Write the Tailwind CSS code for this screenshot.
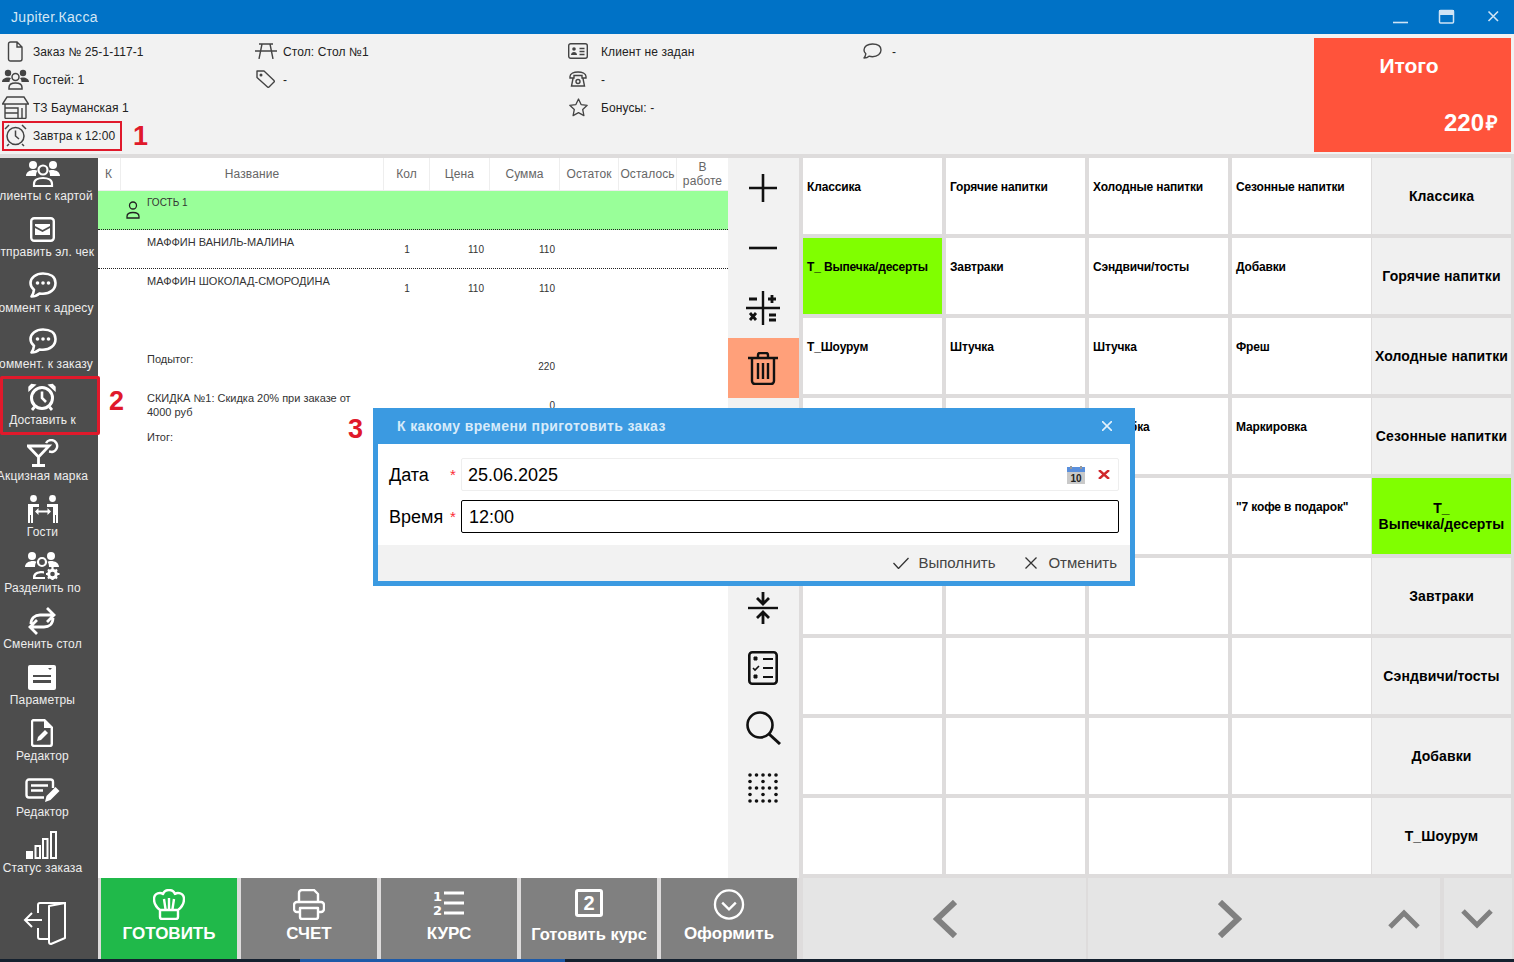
<!DOCTYPE html>
<html lang="ru">
<head>
<meta charset="UTF-8">
<title>Jupiter.Касса</title>
<script src="https://cdn.jsdelivr.net/npm/@tailwindcss/browser@4"></script>
</head>
<body class="relative w-[1514px] h-[962px] overflow-hidden flex flex-col bg-[#dedcdc] font-['Liberation_Sans',Arial,sans-serif] text-black">

<!-- заголовок окна -->
<div class="h-[34px] shrink-0 bg-[#0072c6] flex items-center pl-[11px] text-[#d3e6f5] text-sm">
  <span class="flex-1 tracking-[0.3px]">Jupiter.Касса</span>
  <svg class="w-[120px] h-[34px] mr-[1px]" viewBox="0 0 120 34" fill="none" stroke="#cfe4f5" stroke-width="1.6">
    <path d="M0 22.5H15" />
    <rect x="46.5" y="10.5" width="14" height="12.5" rx="1" stroke-width="1.5" />
    <rect x="46" y="10" width="15" height="5" fill="#cfe4f5" stroke="none" />
    <path d="M95.5 11.5l9.5 9.5M105 11.5l-9.5 9.5" />
  </svg>
</div>

<!-- шапка заказа -->
<div class="h-[120px] shrink-0 bg-[#f2f2f2] flex text-xs text-[#222] tracking-[0.1px]">
  <div class="w-[255px] pt-[3px] flex flex-col">
    <div class="h-[28px] flex items-center">
      <div class="w-[33px] flex justify-center pr-[3px]"><svg class="w-[16px] h-[21px]" viewBox="0 0 16 21" fill="none" stroke="#444" stroke-width="1.4"><path d="M1.5 3a2 2 0 0 1 2-2h6.5l5 5v12a2 2 0 0 1-2 2h-9.500a2 2 0 0 1-2-2zM10 1v5h5"/></svg></div>
      <span class="pt-[2px]">Заказ № 25-1-117-1</span>
    </div>
    <div class="h-[28px] flex items-center">
      <div class="w-[33px] flex justify-center pr-[3px]"><svg class="w-[27px] h-[21px]" viewBox="0 0 27 21" fill="#444"><circle cx="6" cy="4" r="3.200"/><circle cx="21" cy="4" r="3.200"/><path d="M0 13c0-3 3-4.500 6-4.500 1.500 0 2.500.3 3 .7-1 1-1.500 2.300-1.500 3.800zM27 13c0-3-3-4.500-6-4.500-1.500 0-2.500.3-3 .7 1 1 1.500 2.300 1.500 3.800z"/><circle cx="13.500" cy="8" r="3.500" fill="none" stroke="#444" stroke-width="1.500"/><path d="M7 20v-1.500c0-3 3-4.500 6.500-4.500s6.500 1.500 6.500 4.500V20z" fill="none" stroke="#444" stroke-width="1.500"/></svg></div>
      <span class="pt-[2px]">Гостей: 1</span>
    </div>
    <div class="h-[28px] flex items-center">
      <div class="w-[33px] flex justify-center pr-[3px]"><svg class="w-[27px] h-[23px]" viewBox="0 0 27 23" fill="none" stroke="#444" stroke-width="1.400"><path d="M5 1h17l4.500 7H.5zM3 8v14.500M24 8v14.500M3 22.500h21M3 12h13v10.500M3 17h13M20 12v10.500"/></svg></div>
      <span class="pt-[2px]">ТЗ Бауманская 1</span>
    </div>
    <div class="h-[28px] flex items-center">
      <div class="w-[33px] flex justify-center pr-[3px]"><svg class="w-[23px] h-[24px]" viewBox="0 0 23 24" fill="none" stroke="#444" stroke-width="1.500"><circle cx="11.500" cy="13" r="8.500"/><path d="M11.500 7.500V13l3.500 3M1 6l4-4M22 6l-4-4M5 21l-2 2M18 21l2 2"/></svg></div>
      <span class="pt-[2px]">Завтра к 12:00</span>
    </div>
  </div>
  <div class="w-[313px] pt-[3px] flex flex-col">
    <div class="h-[28px] flex items-center">
      <div class="w-[28px]"><svg class="w-[22px] h-[16px]" viewBox="0 0 22 16" fill="none" stroke="#444" stroke-width="1.400"><path d="M4 1h14M0 8h22M7 1L4 16M15 1l3 15"/></svg></div>
      <span class="pt-[2px]">Стол: Стол №1</span>
    </div>
    <div class="h-[28px] flex items-center">
      <div class="w-[28px] pl-[1px]"><svg class="w-[19px] h-[18px]" viewBox="0 0 19 18" fill="none" stroke="#444" stroke-width="1.400"><path d="M1 1h7l10 9.500a1 1 0 0 1 0 1.500l-5 5a1 1 0 0 1-1.500 0L1 7.500z" stroke-linejoin="round"/><circle cx="5" cy="5" r=".8" fill="#444"/></svg></div>
      <span class="pt-[2px]">-</span>
    </div>
    <div class="h-[28px]"></div>
  </div>
  <div class="w-[295px] pt-[3px] flex flex-col">
    <div class="h-[28px] flex items-center">
      <div class="w-[33px]"><svg class="w-[20px] h-[16px]" viewBox="0 0 20 16" fill="none" stroke="#444" stroke-width="1.400"><rect x=".7" y=".7" width="18.600" height="14.600" rx="2"/><circle cx="6" cy="6" r="1.800" fill="#444" stroke="none"/><path d="M3 12c0-2 1.500-3 3-3s3 1 3 3" fill="#444" stroke="none"/><path d="M11.500 5.500h5M11.500 8.500h5M11.500 11.500h5"/></svg></div>
      <span class="pt-[2px]">Клиент не задан</span>
    </div>
    <div class="h-[28px] flex items-center">
      <div class="w-[33px] pl-[1px]"><svg class="w-[18px] h-[16px]" viewBox="0 0 18 16" fill="none" stroke="#444" stroke-width="1.400"><path d="M1 5.500C1 2.500 5 1 9 1s8 1.500 8 4.500V7h-4V4.500H5V7H1zM4 7.500L2.500 15h13L14 7.500"/><circle cx="9" cy="10.500" r="2"/></svg></div>
      <span class="pt-[2px]">-</span>
    </div>
    <div class="h-[28px] flex items-center">
      <div class="w-[33px] pl-[1px]"><svg class="w-[19px] h-[19px]" viewBox="0 0 19 19" fill="none" stroke="#444" stroke-width="1.300"><path d="M9.500 1l2.600 5.600 6.100.7-4.500 4.200 1.200 6.100-5.400-3-5.400 3 1.200-6.100L.8 7.300l6.100-.7z" stroke-linejoin="round"/></svg></div>
      <span class="pt-[2px]">Бонусы: -</span>
    </div>
  </div>
  <div class="w-[451px] pt-[3px]">
    <div class="h-[28px] flex items-center">
      <div class="w-[29px]"><svg class="w-[19px] h-[16px]" viewBox="0 0 19 16" fill="none" stroke="#444" stroke-width="1.400"><path d="M9.500 1C4.500 1 1 3.500 1 7c0 1.500.7 2.800 1.800 3.800C2.500 12.500 2 13.800 1 15c2 0 4-.8 5-1.800 1 .3 2.300.5 3.500.5 5 0 8.500-2.800 8.500-6.700S14.500 1 9.500 1z" stroke-linejoin="round"/></svg></div>
      <span class="pt-[2px]">-</span>
    </div>
  </div>
  <div class="w-[197px] h-[114px] mt-[4px] bg-[#ff533b] text-white font-bold flex flex-col tracking-normal">
    <div class="h-[56px] flex items-center justify-center pr-[7px] text-[21px]">Итого</div>
    <div class="flex-1 flex items-center justify-end pr-[13px] text-[24px]"><span>220</span><span class="ml-[2px] text-[20px]">₽</span></div>
  </div>
</div>

<!-- основная часть -->
<div class="flex-1 mt-[4px] flex min-h-0">

  <!-- левое меню -->
  <div class="w-[98px] shrink-0 bg-[#4d4d4d] flex flex-col overflow-hidden text-xs text-[#eeeeee] tracking-[0.15px]">
    <div class="h-[720px] -mt-[4px] w-[85px] flex flex-col items-center shrink-0 whitespace-nowrap">
      <div class="h-[56px] shrink-0 flex flex-col items-center">
        <div class="h-[34px] flex items-center justify-center pt-[3px]"><svg class="w-[34px] h-[28px]" viewBox="0 0 34 28" fill="#fff"><circle cx="7" cy="6" r="4"/><circle cx="27" cy="6" r="4"/><path d="M0 17c0-4 4-6 8-6 1.500 0 2.800.3 3.500.8C10.500 13 10 14.800 10 17zM34 17c0-4-4-6-8-6-1.500 0-2.800.3-3.500.8C23.500 13 24 14.800 24 17z"/><circle cx="17" cy="11" r="4.500" fill="none" stroke="#fff" stroke-width="2.200"/><path d="M8 27v-2c0-4 4-6 9-6s9 2 9 6v2z" fill="none" stroke="#fff" stroke-width="2.200"/></svg></div>
        <span>Клиенты с картой</span>
      </div>
      <div class="h-[56px] shrink-0 flex flex-col items-center">
        <div class="h-[34px] flex items-center justify-center pt-[4px]"><svg class="w-[25px] h-[25px]" viewBox="0 0 25 25" fill="none"><rect x="1.200" y="1.200" width="22.600" height="22.600" rx="3" stroke="#fff" stroke-width="2.400"/><path d="M5 7h15v2l-7.500 4L5 9zM5 11l7.500 4 7.500-4v7H5z" fill="#fff"/></svg></div>
        <span>Отправить эл. чек</span>
      </div>
      <div class="h-[56px] shrink-0 flex flex-col items-center">
        <div class="h-[34px] flex items-center justify-center pt-[4px]"><svg class="w-[28px] h-[26px]" viewBox="0 0 28 26" fill="none"><path d="M14 1.500C7 1.500 1.500 5.500 1.500 11c0 2.700 1.300 5 3.500 6.700C4.800 20 4 22.500 2.500 24.500c3 0 6-1.300 8-3 1.100.2 2.300.3 3.500.3 7 0 12.500-4.300 12.500-10.800S21 1.500 14 1.500z" stroke="#fff" stroke-width="2.600" stroke-linejoin="round"/><circle cx="8.500" cy="11" r="1.800" fill="#fff"/><circle cx="14" cy="11" r="1.800" fill="#fff"/><circle cx="19.500" cy="11" r="1.800" fill="#fff"/></svg></div>
        <span>Коммент к адресу</span>
      </div>
      <div class="h-[56px] shrink-0 flex flex-col items-center">
        <div class="h-[34px] flex items-center justify-center pt-[4px]"><svg class="w-[28px] h-[26px]" viewBox="0 0 28 26" fill="none"><path d="M14 1.500C7 1.500 1.500 5.500 1.500 11c0 2.700 1.300 5 3.500 6.700C4.800 20 4 22.500 2.500 24.500c3 0 6-1.300 8-3 1.100.2 2.300.3 3.500.3 7 0 12.500-4.300 12.500-10.800S21 1.500 14 1.500z" stroke="#fff" stroke-width="2.600" stroke-linejoin="round"/><circle cx="8.500" cy="11" r="1.800" fill="#fff"/><circle cx="14" cy="11" r="1.800" fill="#fff"/><circle cx="19.500" cy="11" r="1.800" fill="#fff"/></svg></div>
        <span>Коммент. к заказу</span>
      </div>
      <div class="h-[56px] shrink-0 flex flex-col items-center">
        <div class="h-[34px] flex items-center justify-center pt-[4px]"><svg class="w-[28px] h-[28px]" viewBox="0 0 28 28" fill="none" stroke="#fff"><circle cx="14" cy="15" r="10.500" stroke-width="3"/><path d="M14 8.500V15l4 4" stroke-width="2.600"/><path d="M1 7.500L7 2 3.500 1.500 1 4zM27 7.500L21 2l3.500-.5L27 4z" fill="#fff" stroke-width="1.400"/><path d="M6.500 24L4 27M21.500 24l2.500 3" stroke-width="2.800"/></svg></div>
        <span class="tracking-normal">Доставить к</span>
      </div>
      <div class="h-[56px] shrink-0 flex flex-col items-center">
        <div class="h-[34px] flex items-center justify-center pt-[4px]"><svg class="w-[32px] h-[28px]" viewBox="0 0 32 28" fill="none" stroke="#fff" stroke-width="2.800"><path d="M1 7h21l-10.500 11zM11.500 18v8M5 26.500h13"/><path d="M19 4a6 6 0 1 1 6 9l-3-.5" stroke-width="2.400"/></svg></div>
        <span>Акцизная марка</span>
      </div>
      <div class="h-[56px] shrink-0 flex flex-col items-center">
        <div class="h-[34px] flex items-center justify-center pt-[4px]"><svg class="w-[32px] h-[28px]" viewBox="0 0 32 28" fill="#fff"><circle cx="6.500" cy="3.500" r="3.400"/><circle cx="25.500" cy="3.500" r="3.400"/><path d="M1 9h11v3H6v16H4v-8H3v8H1zM31 9H20v3h6v16h2v-8h1v8h2z"/><path d="M8 16.500l3.500-3.500v2.500h9V13l3.500 3.500-3.500 3.500v-2.500h-9V20z"/></svg></div>
        <span>Гости</span>
      </div>
      <div class="h-[56px] shrink-0 flex flex-col items-center">
        <div class="h-[34px] flex items-center justify-center pt-[4px]"><svg class="w-[35px] h-[29px]" viewBox="0 0 35 29" fill="#fff"><circle cx="7" cy="5" r="4"/><circle cx="26" cy="5" r="4"/><path d="M0 16c0-4 4-6 8-6 1.500 0 2.800.3 3.500.8C10.500 12 10 13.800 10 16zM34 16c0-4-4-6-8-6-1.500 0-2.800.3-3.500.8 1 1.200 1.500 3 1.500 5.200z"/><circle cx="17" cy="11" r="4" fill="none" stroke="#fff" stroke-width="2.200"/><path d="M8 28v-2c0-4 4-6 9-6l2 .2v2.300l-2-.2c-4 0-6.500 1.500-6.500 3.700H20V28z"/><circle cx="27.500" cy="23" r="3.800" fill="none" stroke="#fff" stroke-width="3"/><path d="M27.500 16v2.500M27.500 27.500V30M21 23h2.500M32 23h2.500M23 18.500l1.700 1.700M30.300 25.800l1.700 1.700M32 18.500l-1.700 1.700M24.700 25.800L23 27.500" stroke="#fff" stroke-width="2.200"/></svg></div>
        <span>Разделить по</span>
      </div>
      <div class="h-[56px] shrink-0 flex flex-col items-center">
        <div class="h-[34px] flex items-center justify-center pt-[4px]"><svg class="w-[28px] h-[28px]" viewBox="0 0 28 28" fill="none" stroke="#fff" stroke-width="2.800"><path d="M3 17C3 11 7 8 12 8h14M19 1l7 7-7 7M25 11c0 6-4 9-9 9H2M9 13l-7 7 7 7"/></svg></div>
        <span>Сменить стол</span>
      </div>
      <div class="h-[56px] shrink-0 flex flex-col items-center">
        <div class="h-[34px] flex items-center justify-center pt-[4px]"><svg class="w-[28px] h-[25px]" viewBox="0 0 28 25" fill="#fff"><path d="M2 0h24a2 2 0 0 1 2 2v21a2 2 0 0 1-2 2H2a2 2 0 0 1-2-2V2a2 2 0 0 1 2-2z"/><path d="M20 3h4l-2 2z" fill="#4d4d4d"/><path d="M5 10h18v2H5zM5 15h18v3H5z" fill="#4d4d4d"/></svg></div>
        <span>Параметры</span>
      </div>
      <div class="h-[56px] shrink-0 flex flex-col items-center">
        <div class="h-[34px] flex items-center justify-center pt-[4px]"><svg class="w-[22px] h-[28px]" viewBox="0 0 22 28" fill="none"><path d="M2 1.200h11.500l7.300 7.300V25a2 2 0 0 1-2 2H3a2 2 0 0 1-2-2V3a2 2 0 0 1 1-1.800z" stroke="#fff" stroke-width="2.400"/><path d="M13 1v8h8z" fill="#fff"/><path d="M6 22l1-4 7-7 3 3-7 7z" fill="#fff"/></svg></div>
        <span>Редактор</span>
      </div>
      <div class="h-[56px] shrink-0 flex flex-col items-center">
        <div class="h-[34px] flex items-center justify-center pt-[6px]"><svg class="w-[35px] h-[25px]" viewBox="0 0 35 25" fill="none"><path d="M28 10V4a2.500 2.500 0 0 0-2.500-2.500H4A2.500 2.500 0 0 0 1.500 4v13A2.500 2.500 0 0 0 4 19.500h15" stroke="#fff" stroke-width="2.400"/><path d="M6 7.500h17M6 12.500h12" stroke="#fff" stroke-width="2.400"/><path d="M20 24l1.500-6 9-9 4 4-9 9z" fill="#fff"/></svg></div>
        <span>Редактор</span>
      </div>
      <div class="h-[56px] shrink-0 flex flex-col items-center">
        <div class="h-[34px] flex items-center justify-center pt-[4px]"><svg class="w-[33px] h-[28px]" viewBox="0 0 33 28" fill="none" stroke="#fff" stroke-width="2"><rect x="1" y="21" width="5" height="6" fill="#fff"/><rect x="9.500" y="15" width="4.500" height="12"/><rect x="17" y="8" width="4.500" height="19"/><rect x="25" y="1" width="5" height="26"/></svg></div>
        <span>Статус заказа</span>
      </div>
    </div>
    <div class="flex-1 flex items-center justify-center pl-[1px] pt-[13px] pr-[9px]">
      <svg class="w-[44px] h-[44px]" viewBox="0 0 44 44" fill="none" stroke="#fff" stroke-width="2"><path d="M2 19h17M9 12l-7 7 7 7" /><path d="M15 12V4a2 2 0 0 1 2-2h26M15 27v9a2 2 0 0 0 2 2h9" /><path d="M26 5l16-3v35l-14 6a2 2 0 0 1-2-2z" stroke-linejoin="round"/></svg>
    </div>
  </div>

  <!-- центр: чек и кнопки -->
  <div class="w-[705px] shrink-0 flex flex-col">
    <div class="h-[720px] shrink-0 flex">
      <div class="w-[630px] bg-white">
        <div class="h-[33px] grid grid-cols-[23px_263px_46px_60px_70px_59px_58px_51px] text-xs leading-[14px] text-[#666] text-center tracking-[0.1px]">
          <div class="flex items-center justify-start pl-[7px] border-r border-b border-[#eeeeee]">К</div>
          <div class="flex items-center justify-center border-r border-b border-[#eeeeee]">Название</div>
          <div class="flex items-center justify-center border-r border-b border-[#eeeeee]">Кол</div>
          <div class="flex items-center justify-center border-r border-b border-[#eeeeee]">Цена</div>
          <div class="flex items-center justify-center border-r border-b border-[#eeeeee]">Сумма</div>
          <div class="flex items-center justify-center border-r border-b border-[#eeeeee]">Остаток</div>
          <div class="flex items-center justify-center border-r border-b border-[#eeeeee] whitespace-nowrap">Осталось</div>
          <div class="flex items-center justify-center border-b border-[#eeeeee]">В<br>работе</div>
        </div>
        <div class="h-[39px] bg-[#99ff99] border-b border-dotted border-[#222] flex text-[10px] leading-[12px] text-[#333]">
          <div class="w-[49px] flex justify-end items-end pb-[10px] pr-[7px]"><svg class="w-[14px] h-[18px]" viewBox="0 0 14 18" fill="none" stroke="#222" stroke-width="1.300"><circle cx="7" cy="4.500" r="3.500"/><path d="M1 17v-1.500c0-2.500 2.500-4 6-4s6 1.500 6 4V17z"/></svg></div>
          <div class="pt-[6px]">ГОСТЬ 1</div>
        </div>
        <div class="h-[39px] border-b border-dotted border-[#222] grid grid-cols-[49px_237px_46px_60px_70px] text-[10px] leading-[12px] text-[#333]">
          <div></div>
          <div class="pt-[6px] text-[11px]">МАФФИН ВАНИЛЬ-МАЛИНА</div>
          <div class="pt-[14px] text-center">1</div>
          <div class="pt-[14px] text-right pr-[6px]">110</div>
          <div class="pt-[14px] text-right pr-[5px]">110</div>
        </div>
        <div class="h-[39px] grid grid-cols-[49px_237px_46px_60px_70px] text-[10px] leading-[12px] text-[#333]">
          <div></div>
          <div class="pt-[6px] text-[11px]">МАФФИН ШОКОЛАД-СМОРОДИНА</div>
          <div class="pt-[14px] text-center">1</div>
          <div class="pt-[14px] text-right pr-[6px]">110</div>
          <div class="pt-[14px] text-right pr-[5px]">110</div>
        </div>
        <div class="h-[39px]"></div>
        <div class="h-[39px] grid grid-cols-[49px_237px_46px_60px_70px] text-[10px] leading-[12px] text-[#333]">
          <div></div>
          <div class="pt-[6px] text-[11px]">Подытог:</div>
          <div></div>
          <div></div>
          <div class="pt-[14px] text-right pr-[5px]">220</div>
        </div>
        <div class="h-[39px] grid grid-cols-[49px_237px_46px_60px_70px] text-[10px] leading-[14px] text-[#333]">
          <div></div>
          <div class="pt-[5px] pr-[20px] text-[11px]">СКИДКА №1: Скидка 20% при заказе от 4000 руб</div>
          <div></div>
          <div></div>
          <div class="pt-[13px] text-right pr-[5px]">0</div>
        </div>
        <div class="h-[39px] grid grid-cols-[49px_237px_46px_60px_70px] text-[10px] leading-[12px] text-[#333]">
          <div></div>
          <div class="pt-[6px] text-[11px]">Итог:</div>
        </div>
      </div>
      <div class="w-[71px] bg-[#f2f2f2] flex flex-col">
        <div class="h-[60px] flex items-center justify-center"><svg class="w-[28px] h-[28px] -ml-[2px]" viewBox="0 0 28 28" stroke="#111" stroke-width="2.600"><path d="M14 0v28M0 14h28"/></svg></div>
        <div class="h-[60px] flex items-center justify-center"><svg class="w-[28px] h-[28px] -ml-[2px]" viewBox="0 0 28 28" stroke="#111" stroke-width="2.600"><path d="M0 14h28"/></svg></div>
        <div class="h-[60px] flex items-center justify-center"><svg class="w-[34px] h-[34px] -ml-[2px]" viewBox="0 0 34 34" stroke="#111" fill="none"><path d="M17 0v34M0 17h34" stroke-width="2.400"/><path d="M3 8h8M22 8h8M26 4v8M23 29h7M23 24h7" stroke-width="2.800"/><path d="M4 22l6 7M10 22l-6 7" stroke-width="2.800"/></svg></div>
        <div class="h-[60px] flex items-center justify-center bg-[#ffa07a]"><svg class="w-[30px] h-[33px] -ml-[2px]" viewBox="0 0 30 33" stroke="#111" stroke-width="2.400" fill="none"><path d="M0 6h30M10 6V3a2 2 0 0 1 2-2h6a2 2 0 0 1 2 2v3M4 6v23a3 3 0 0 0 3 3h16a3 3 0 0 0 3-3V6M10 11v16M15 11v16M20 11v16"/></svg></div>
        <div class="h-[60px]"></div>
        <div class="h-[60px]"></div>
        <div class="h-[60px]"></div>
        <div class="h-[60px] flex items-center justify-center"><svg class="w-[30px] h-[32px] -ml-[2px]" viewBox="0 0 30 32" stroke="#111" fill="none"><path d="M0 16h30" stroke-width="2.400"/><path d="M15 0v11M9 6l6 6 6-6M15 32V21M9 26l6-6 6 6" stroke-width="2.800"/></svg></div>
        <div class="h-[60px] flex items-center justify-center"><svg class="w-[30px] h-[34px] -ml-[2px]" viewBox="0 0 30 34" stroke="#111" fill="none"><rect x="1.300" y="1.300" width="27.400" height="31.400" rx="3" stroke-width="2.600"/><path d="M15 8h10M15 17h10M15 26h10" stroke-width="2.200"/><path d="M6 6h3v3H6zM6 24h3v3H6z" fill="#111" stroke-width="1"/><path d="M5 17l2 2 4-4" stroke-width="1.600"/></svg></div>
        <div class="h-[60px] flex items-center justify-center"><svg class="w-[35px] h-[34px]" viewBox="0 0 35 34" stroke="#111" fill="none"><circle cx="14" cy="14" r="12.500" stroke-width="2.600"/><path d="M23 23l11 10" stroke-width="3"/></svg></div>
        <div class="h-[60px] flex items-center justify-center"><svg class="w-[30px] h-[30px] -ml-[2px]" viewBox="0 0 30 30" fill="#111"><circle cx="2" cy="2" r="1.800"/><circle cx="8.500" cy="2" r="1.800"/><circle cx="15" cy="2" r="1.800"/><circle cx="21.500" cy="2" r="1.800"/><circle cx="28" cy="2" r="1.800"/><circle cx="2" cy="8.500" r="1.800"/><circle cx="15" cy="8.500" r="1.800"/><circle cx="28" cy="8.500" r="1.800"/><circle cx="2" cy="15" r="1.800"/><circle cx="8.500" cy="15" r="1.800"/><circle cx="15" cy="15" r="1.800"/><circle cx="21.500" cy="15" r="1.800"/><circle cx="28" cy="15" r="1.800"/><circle cx="2" cy="21.500" r="1.800"/><circle cx="15" cy="21.500" r="1.800"/><circle cx="28" cy="21.500" r="1.800"/><circle cx="2" cy="28" r="1.800"/><circle cx="8.500" cy="28" r="1.800"/><circle cx="15" cy="28" r="1.800"/><circle cx="21.500" cy="28" r="1.800"/><circle cx="28" cy="28" r="1.800"/></svg></div>
        <div class="h-[60px]"></div>
      </div>
    </div>
    <div class="flex-1 flex gap-1 pl-[3px] text-white font-bold text-[17px] leading-[20px]">
      <div class="w-[136px] bg-[#20b94a] flex flex-col items-center pt-[11px]">
        <svg class="w-[32px] h-[31px] mb-[4px]" viewBox="0 0 32 31" fill="none" stroke="#fff" stroke-width="2.400"><path d="M7 21C3 18 1 14 1 10c0-4 3-6 6-6 1 0 2 .3 3 1 1-2.500 3.500-4 6-4s5 1.500 6 4c1-.7 2-1 3-1 3 0 6 2 6 6 0 4-2 8-6 11zM7 21v7a2 2 0 0 0 2 2h14a2 2 0 0 0 2-2v-7M11 10l1.500 10M16 9v11M21 10l-1.500 10" stroke-linejoin="round"/></svg>
        <span>ГОТОВИТЬ</span>
      </div>
      <div class="w-[136px] bg-[#808080] flex flex-col items-center pt-[11px]">
        <svg class="w-[32px] h-[31px] mb-[4px]" viewBox="0 0 32 31" fill="none" stroke="#fff" stroke-width="2.400"><path d="M6 13V4a3 3 0 0 1 3-3h12l4 4v8M6 23H4a3 3 0 0 1-3-3v-4a3 3 0 0 1 3-3h24a3 3 0 0 1 3 3v4a3 3 0 0 1-3 3h-2M7 19h18v9a2 2 0 0 1-2 2H9a2 2 0 0 1-2-2z" stroke-linejoin="round"/></svg>
        <span>СЧЕТ</span>
      </div>
      <div class="w-[136px] bg-[#808080] flex flex-col items-center pt-[11px]">
        <div class="w-[32px] h-[31px] mb-[4px] flex">
          <div class="w-[10px] text-[13px] leading-[14px] font-['DejaVu_Sans',sans-serif] pt-[1px]">1<br>2</div>
          <svg class="w-[21px] h-[31px] ml-px" viewBox="0 0 21 31" stroke="#fff" stroke-width="2.800"><path d="M0 4h20M0 14h20M0 24h20"/></svg>
        </div>
        <span>КУРС</span>
      </div>
      <div class="w-[136px] bg-[#808080] flex flex-col items-center pt-[11px]">
        <div class="w-[28px] h-[28px] mb-[7px] border-[3px] border-white rounded-[3px] flex items-center justify-center text-[20px] leading-none">2</div>
        <span class="text-[16.500px]">Готовить курс</span>
      </div>
      <div class="w-[136px] bg-[#808080] flex flex-col items-center pt-[11px]">
        <svg class="w-[32px] h-[31px] mb-[4px]" viewBox="0 0 32 32" fill="none" stroke="#fff" stroke-width="2.400"><circle cx="16" cy="16" r="14.500"/><path d="M9 14l7 7 7-7"/></svg>
        <span>Оформить</span>
      </div>
    </div>
  </div>

  <!-- плитки товаров -->
  <div class="flex-1 flex flex-col">
    <div class="h-[720px] shrink-0 flex">
      <div class="w-[568px] grid grid-cols-[139px_139px_139px_139px] grid-rows-[repeat(9,76px)] gap-1 text-xs font-bold leading-[14px] tracking-[-0.15px]">
        <div class="bg-white px-1 pt-[22px]">Классика</div>
        <div class="bg-white px-1 pt-[22px]">Горячие напитки</div>
        <div class="bg-white px-1 pt-[22px]">Холодные напитки</div>
        <div class="bg-white px-1 pt-[22px]">Сезонные напитки</div>
        <div class="bg-[#80ff00] px-1 pt-[22px]">Т_ Выпечка/десерты</div>
        <div class="bg-white px-1 pt-[22px]">Завтраки</div>
        <div class="bg-white px-1 pt-[22px]">Сэндвичи/тосты</div>
        <div class="bg-white px-1 pt-[22px]">Добавки</div>
        <div class="bg-white px-1 pt-[22px]">Т_Шоурум</div>
        <div class="bg-white px-1 pt-[22px]">Штучка</div>
        <div class="bg-white px-1 pt-[22px]">Штучка</div>
        <div class="bg-white px-1 pt-[22px]">Фреш</div>
        <div class="bg-white"></div>
        <div class="bg-white"></div>
        <div class="bg-white px-1 pt-[22px]">Т_Сдобка</div>
        <div class="bg-white px-1 pt-[22px]">Маркировка</div>
        <div class="bg-white"></div>
        <div class="bg-white"></div>
        <div class="bg-white"></div>
        <div class="bg-white px-1 pt-[22px]">"7 кофе в подарок"</div>
        <div class="bg-white"></div>
        <div class="bg-white"></div>
        <div class="bg-white"></div>
        <div class="bg-white"></div>
        <div class="bg-white"></div>
        <div class="bg-white"></div>
        <div class="bg-white"></div>
        <div class="bg-white"></div>
        <div class="bg-white"></div>
        <div class="bg-white"></div>
        <div class="bg-white"></div>
        <div class="bg-white"></div>
        <div class="bg-white"></div>
        <div class="bg-white"></div>
        <div class="bg-white"></div>
        <div class="bg-white"></div>
      </div>
      <div class="w-[139px] ml-px grid grid-rows-[repeat(9,76px)] gap-1 text-sm font-bold leading-[16px] text-center tracking-[0.12px]">
        <div class="bg-[#f0f0f0] flex items-center justify-center">Классика</div>
        <div class="bg-[#f0f0f0] flex items-center justify-center">Горячие напитки</div>
        <div class="bg-[#f0f0f0] flex items-center justify-center">Холодные напитки</div>
        <div class="bg-[#f0f0f0] flex items-center justify-center">Сезонные напитки</div>
        <div class="bg-[#80ff00] flex items-center justify-center">Т_<br>Выпечка/десерты</div>
        <div class="bg-[#f0f0f0] flex items-center justify-center">Завтраки</div>
        <div class="bg-[#f0f0f0] flex items-center justify-center">Сэндвичи/тосты</div>
        <div class="bg-[#f0f0f0] flex items-center justify-center">Добавки</div>
        <div class="bg-[#f0f0f0] flex items-center justify-center">Т_Шоурум</div>
      </div>
    </div>
    <div class="flex-1 flex">
      <div class="w-[283px] bg-[#e5e5e5] flex items-center justify-center"><svg class="w-[24px] h-[38px]" viewBox="0 0 24 38" fill="none" stroke="#808080" stroke-width="6"><path d="M22 2L4 19l18 17"/></svg></div>
      <div class="w-[283px] ml-[2px] bg-[#e5e5e5] flex items-center justify-center"><svg class="w-[24px] h-[38px]" viewBox="0 0 24 38" fill="none" stroke="#808080" stroke-width="6"><path d="M2 2l18 17L2 36"/></svg></div>
      <div class="w-[69px] bg-[#e5e5e5] flex items-center justify-center pr-[3px]"><svg class="w-[32px] h-[20px]" viewBox="0 0 32 20" fill="none" stroke="#808080" stroke-width="5"><path d="M2 18L16 4l14 14"/></svg></div>
      <div class="w-[68px] ml-1 bg-[#e5e5e5] flex items-center justify-center pr-[3px]"><svg class="w-[32px] h-[20px]" viewBox="0 0 32 20" fill="none" stroke="#808080" stroke-width="5"><path d="M2 2l14 14L30 2"/></svg></div>
    </div>
  </div>
</div>

<!-- панель задач снизу -->
<div class="h-[3px] shrink-0 bg-[#14202e] flex"><div class="w-[265px] ml-[300px] bg-[#1d5aa8]"></div></div>

<!-- диалог -->
<div class="absolute left-[373px] top-[408px] w-[762px] h-[178px] border-x-[5px] border-b-[5px] border-[#3b9ae1] flex flex-col bg-white">
  <div class="h-[36px] shrink-0 -mx-[5px] bg-[#3b9ae1] flex items-center pl-[24px] pr-[23px] text-sm font-bold text-[#d7ebfa] tracking-[0.38px]">
    <span class="flex-1">К какому времени приготовить заказ</span>
    <svg class="w-[10px] h-[10px]" viewBox="0 0 10 10" stroke="#e3f1fb" stroke-width="1.600"><path d="M0 0l10 10M10 0L0 10"/></svg>
  </div>
  <div class="h-[101px] shrink-0 pt-[14px] pl-[11px] pr-[11px] flex flex-col gap-[9px] text-lg">
    <div class="flex h-[33px] items-center">
      <span class="w-[61px] shrink-0">Дата</span><span class="w-[11px] shrink-0 text-red-500 text-[15px]">*</span>
      <div class="flex-1 h-full border border-[#eeeeee] rounded-[2px] flex items-center pl-[6px] pr-[8px]">
        <span class="flex-1">25.06.2025</span>
        <svg class="w-[18px] h-[18px] mr-[13px]" viewBox="0 0 18 18"><rect x="0" y="1" width="18" height="17" fill="#c9c9c9"/><rect x="0" y="1" width="18" height="5" fill="#5a8fdc"/><rect x="3" y="0" width="2" height="3" fill="#999"/><rect x="13" y="0" width="2" height="3" fill="#999"/><text x="9" y="16" text-anchor="middle" font-size="10" font-weight="700" fill="#222" font-family="Liberation Sans">10</text></svg>
        <svg class="w-[12px] h-[9px]" viewBox="0 0 12 9" stroke="#d0282c" stroke-width="2.400"><path d="M1 0l10 9M11 0L1 9"/></svg>
      </div>
    </div>
    <div class="flex h-[33px] items-center">
      <span class="w-[61px] shrink-0">Время</span><span class="w-[11px] shrink-0 text-red-500 text-[15px]">*</span>
      <div class="flex-1 h-full border border-black rounded-[2px] flex items-center pl-[7px]">12:00</div>
    </div>
  </div>
  <div class="flex-1 bg-[#f2f2f2] flex items-center justify-end pr-[13px] text-[15px] text-[#444]">
    <svg class="w-[16px] h-[12px] mr-[9px]" viewBox="0 0 16 12" fill="none" stroke="#333" stroke-width="1.300"><path d="M0.500 6l5 5.500L15.500 1"/></svg>
    <span>Выполнить</span>
    <svg class="w-[12px] h-[12px] ml-[30px] mr-[11px]" viewBox="0 0 12 12" fill="none" stroke="#333" stroke-width="1.300"><path d="M0.500 0.500l11 11M11.500 0.500l-11 11"/></svg>
    <span>Отменить</span>
  </div>
</div>

<!-- пометки на скриншоте -->
<div class="absolute left-[2px] top-[121px] w-[120px] h-[30px] border-2 border-[#e0192b]"></div>
<div class="absolute left-[0px] top-[376px] w-[100px] h-[59px] border-[3px] border-[#e0192b] rounded-[2px]"></div>
<span class="absolute left-[133px] top-[120px] text-[27px] leading-[32px] font-bold text-[#e0192b]">1</span>
<span class="absolute left-[109px] top-[385px] text-[27px] leading-[32px] font-bold text-[#e0192b]">2</span>
<span class="absolute left-[348px] top-[413px] text-[27px] leading-[32px] font-bold text-[#e0192b]">3</span>
</body>
</html>
